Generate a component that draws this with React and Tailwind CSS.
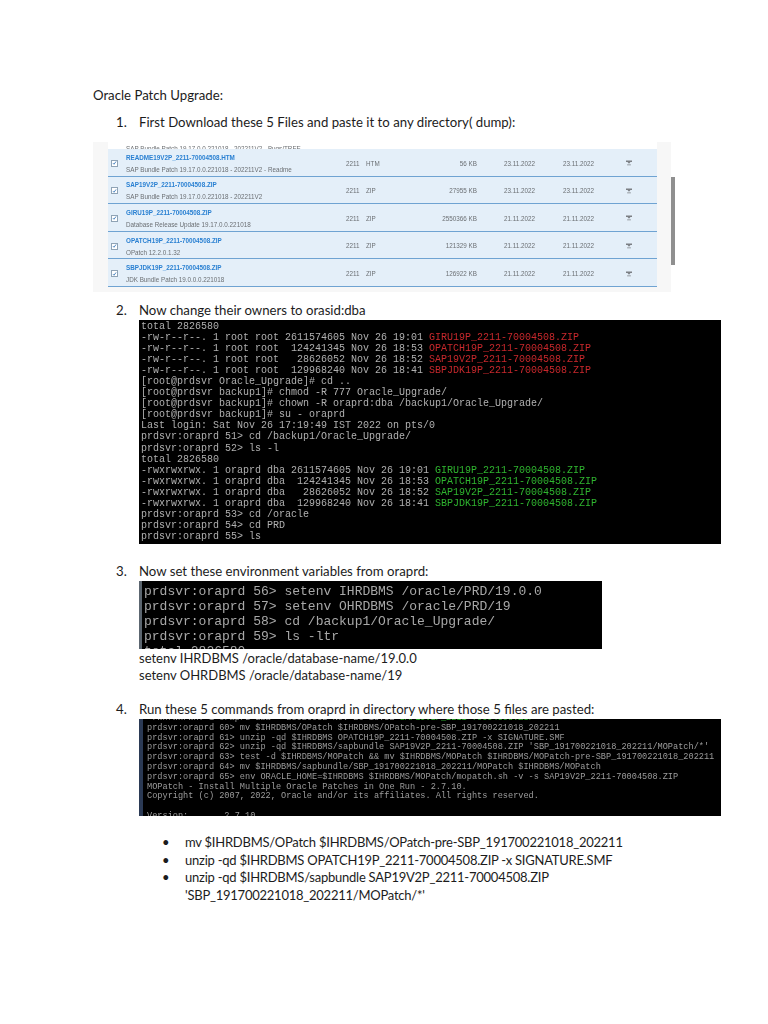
import React from "react";

const files = [
  { name: "README19V2P_2211-70004508.HTM", desc: "SAP Bundle Patch 19.17.0.0.221018 - 202211V2 - Readme", type: "HTM", size: "56 KB", date: "23.11.2022" },
  { name: "SAP19V2P_2211-70004508.ZIP", desc: "SAP Bundle Patch 19.17.0.0.221018 - 202211V2", type: "ZIP", size: "27955 KB", date: "23.11.2022" },
  { name: "GIRU19P_2211-70004508.ZIP", desc: "Database Release Update 19.17.0.0.221018", type: "ZIP", size: "2550366 KB", date: "21.11.2022" },
  { name: "OPATCH19P_2211-70004508.ZIP", desc: "OPatch 12.2.0.1.32", type: "ZIP", size: "121329 KB", date: "21.11.2022" },
  { name: "SBPJDK19P_2211-70004508.ZIP", desc: "JDK Bundle Patch 19.0.0.0.221018", type: "ZIP", size: "126922 KB", date: "21.11.2022" },
];

const ownerLines = [
  { text: "total 2826580" },
  { text: "-rw-r--r--. 1 root root 2611574605 Nov 26 19:01 ", file: "GIRU19P_2211-70004508.ZIP", color: "text-[#c8282c]" },
  { text: "-rw-r--r--. 1 root root  124241345 Nov 26 18:53 ", file: "OPATCH19P_2211-70004508.ZIP", color: "text-[#c8282c]" },
  { text: "-rw-r--r--. 1 root root   28626052 Nov 26 18:52 ", file: "SAP19V2P_2211-70004508.ZIP", color: "text-[#c8282c]" },
  { text: "-rw-r--r--. 1 root root  129968240 Nov 26 18:41 ", file: "SBPJDK19P_2211-70004508.ZIP", color: "text-[#c8282c]" },
  { text: "[root@prdsvr Oracle_Upgrade]# cd .." },
  { text: "[root@prdsvr backup1]# chmod -R 777 Oracle_Upgrade/" },
  { text: "[root@prdsvr backup1]# chown -R oraprd:dba /backup1/Oracle_Upgrade/" },
  { text: "[root@prdsvr backup1]# su - oraprd" },
  { text: "Last login: Sat Nov 26 17:19:49 IST 2022 on pts/0" },
  { text: "prdsvr:oraprd 51> cd /backup1/Oracle_Upgrade/" },
  { text: "prdsvr:oraprd 52> ls -l" },
  { text: "total 2826580" },
  { text: "-rwxrwxrwx. 1 oraprd dba 2611574605 Nov 26 19:01 ", file: "GIRU19P_2211-70004508.ZIP", color: "text-[#2fb52f]" },
  { text: "-rwxrwxrwx. 1 oraprd dba  124241345 Nov 26 18:53 ", file: "OPATCH19P_2211-70004508.ZIP", color: "text-[#2fb52f]" },
  { text: "-rwxrwxrwx. 1 oraprd dba   28626052 Nov 26 18:52 ", file: "SAP19V2P_2211-70004508.ZIP", color: "text-[#2fb52f]" },
  { text: "-rwxrwxrwx. 1 oraprd dba  129968240 Nov 26 18:41 ", file: "SBPJDK19P_2211-70004508.ZIP", color: "text-[#2fb52f]" },
  { text: "prdsvr:oraprd 53> cd /oracle" },
  { text: "prdsvr:oraprd 54> cd PRD" },
  { text: "prdsvr:oraprd 55> ls" },
];

const envLines = [
  "prdsvr:oraprd 56> setenv IHRDBMS /oracle/PRD/19.0.0",
  "prdsvr:oraprd 57> setenv OHRDBMS /oracle/PRD/19",
  "prdsvr:oraprd 58> cd /backup1/Oracle_Upgrade/",
  "prdsvr:oraprd 59> ls -ltr",
  "total 2826580",
];

const commandLines = [
  "prdsvr:oraprd 60> mv $IHRDBMS/OPatch $IHRDBMS/OPatch-pre-SBP_191700221018_202211",
  "prdsvr:oraprd 61> unzip -qd $IHRDBMS OPATCH19P_2211-70004508.ZIP -x SIGNATURE.SMF",
  "prdsvr:oraprd 62> unzip -qd $IHRDBMS/sapbundle SAP19V2P_2211-70004508.ZIP 'SBP_191700221018_202211/MOPatch/*'",
  "prdsvr:oraprd 63> test -d $IHRDBMS/MOPatch && mv $IHRDBMS/MOPatch $IHRDBMS/MOPatch-pre-SBP_191700221018_202211",
  "prdsvr:oraprd 64> mv $IHRDBMS/sapbundle/SBP_191700221018_202211/MOPatch $IHRDBMS/MOPatch",
  "prdsvr:oraprd 65> env ORACLE_HOME=$IHRDBMS $IHRDBMS/MOPatch/mopatch.sh -v -s SAP19V2P_2211-70004508.ZIP",
  "MOPatch - Install Multiple Oracle Patches in One Run - 2.7.10.",
  "Copyright (c) 2007, 2022, Oracle and/or its affiliates. All rights reserved.",
  "",
  "Version:       2.7.10",
];

const FileRow = ({ file }) => (
  <div className="flex h-[27.6px] shrink-0 items-center border-b-[1.5px] border-[#6fa3d2] bg-[#e4eff9] pt-[2px] text-[6.3px] text-[#6b6f73]">
    <div className="ml-[3px] flex h-[7px] w-[7px] shrink-0 items-center justify-center border-[0.5px] border-[#8fa3b5] bg-white">
      <svg viewBox="0 0 8 8" className="h-[6px] w-[6px]" fill="none" stroke="#2a6fb5" strokeWidth="1.3">
        <path d="M1.5 4.2 3.2 6 6.5 1.5" />
      </svg>
    </div>
    <div className="ml-[8px] w-[220px] shrink-0">
      <div className="font-bold leading-[7px] text-[#2a80d2]">{file.name}</div>
      <div className="mt-[5px] leading-[7px]">{file.desc}</div>
    </div>
    <div className="w-[20px] shrink-0">2211</div>
    <div className="w-[30px] shrink-0">{file.type}</div>
    <div className="w-[81px] shrink-0 text-right">{file.size}</div>
    <div className="ml-[27px] w-[59px] shrink-0">{file.date}</div>
    <div className="w-[63px] shrink-0">{file.date}</div>
    <svg viewBox="0 0 8 7" className="h-[6px] w-[6px] shrink-0" fill="#7b7f84">
      <path d="M0 0h8v2H6L4 4.6 2 2H0zM1.5 5.4h5V6.4h-5z" />
    </svg>
  </div>
);

const Terminal = ({ className, children }) => (
  <div className={`overflow-hidden whitespace-pre bg-black font-['Liberation_Mono',monospace] blur-[0.4px] ${className}`}>
    {children}
  </div>
);

const ListLine = ({ num, className, children }) => (
  <div className={`flex pl-[23px] ${className}`}>
    <span className="w-[23px]">{num}</span>
    <span>{children}</span>
  </div>
);

export default function App() {
  return (
    <div className="min-h-[1024px] bg-white pl-[93px] pt-[87px] font-['Lato',sans-serif] text-[13.2px] leading-[17.5px] text-[#1c1c1c]">
      <p>Oracle Patch Upgrade:</p>

      <ListLine num="1." className="mt-[9px]">First Download these 5 Files and paste it to any directory( dump):</ListLine>

      <div className="mt-[11px] flex h-[150px] items-stretch">
        <div className="flex h-full w-[578px] flex-col overflow-hidden bg-[#f7f7f7] pl-[15px] pr-[14px] font-['Liberation_Sans',sans-serif] blur-[0.4px]">
          <div className="flex h-[7px] shrink-0 items-end overflow-hidden bg-white pl-[18px] text-[6.3px] leading-[6px] text-[#6b6f73]">
            <span className="translate-y-[3px]">SAP Bundle Patch 19.17.0.0.221018 - 202211V2 - Bugs/TREE</span>
          </div>
          {files.map((file) => (
            <FileRow key={file.name} file={file} />
          ))}
        </div>
        <div className="mt-[35px] h-[88px] w-[4px] bg-[#8f8f8f]" />
      </div>

      <ListLine num="2." className="mt-[10px]">Now change their owners to orasid:dba</ListLine>

      <Terminal className="ml-[46px] mt-[0.5px] h-[224px] w-[582px] pl-[2px] pt-[0.5px] text-[10px] leading-[11.1px] text-[#b0b0b0]">
        {ownerLines.map((line, i) => (
          <div key={i}>
            {line.text}
            {line.file && <span className={line.color}>{line.file}</span>}
          </div>
        ))}
      </Terminal>

      <ListLine num="3." className="mt-[19px]">Now set these environment variables from oraprd:</ListLine>

      <Terminal className="ml-[46px] h-[68px] w-[463px] border-l-[3px] border-[#5c6670] pl-[2px] pt-[3px] text-[13px] leading-[15px] text-[#a8a8a8]">
        {envLines.map((line) => (
          <div key={line}>{line}</div>
        ))}
      </Terminal>

      <div className="mt-[1px] pl-[46px] text-[13px]">
        <p>setenv IHRDBMS /oracle/database-name/19.0.0</p>
        <p>setenv OHRDBMS /oracle/database-name/19</p>
      </div>

      <ListLine num="4." className="mt-[16px]">Run these 5 commands from oraprd in directory where those 5 files are pasted:</ListLine>

      <Terminal className="ml-[46px] mt-[1px] h-[97px] w-[582px] border-l-[4px] border-[#2b3a55] pl-[4px] text-[8.6px] leading-[9.8px] text-[#9c9c9c]">
        <div className="-mt-[5px] h-[9.8px]">
          -rwxrwxrwx. 1 oraprd dba   28626052 Nov 26 18:52 <span className="text-[#2fb52f]">SAP19V2P_2211-70004508.ZIP</span>
        </div>
        {commandLines.map((line, i) => (
          <div key={i} className="h-[9.8px]">{line}</div>
        ))}
      </Terminal>

      <ul className="mt-[18px] pl-[69px] text-[13px] tracking-[-0.24px]">
        <li className="flex">
          <span className="w-[23px]">•</span>
          <span>mv $IHRDBMS/OPatch $IHRDBMS/OPatch-pre-SBP_191700221018_202211</span>
        </li>
        <li className="flex">
          <span className="w-[23px]">•</span>
          <span>unzip -qd $IHRDBMS OPATCH19P_2211-70004508.ZIP -x SIGNATURE.SMF</span>
        </li>
        <li className="flex">
          <span className="w-[23px] shrink-0">•</span>
          <span className="w-[400px]">unzip -qd $IHRDBMS/sapbundle SAP19V2P_2211-70004508.ZIP 'SBP_191700221018_202211/MOPatch/*'</span>
        </li>
      </ul>
    </div>
  );
}
